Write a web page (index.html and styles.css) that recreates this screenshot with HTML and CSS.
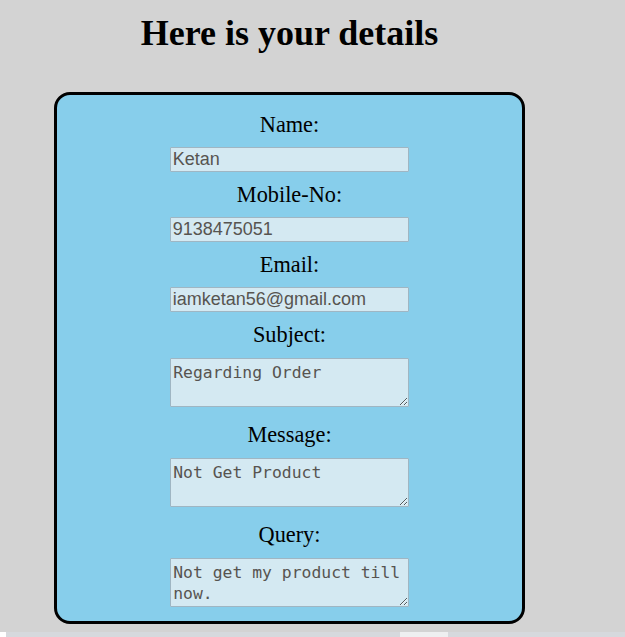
FILE: index.html
```html
<!DOCTYPE html>
<html>
<head>
<meta charset="utf-8">
<title>Details</title>
<link rel="stylesheet" href="styles.css">
</head>
<body>
<div class="page">
  <h1 class="title">Here is your details</h1>
  <form class="card">
    <label class="lbl" for="name">Name:</label>
    <input class="field" id="name" type="text" value="Ketan">
    <label class="lbl" for="mobile">Mobile-No:</label>
    <input class="field" id="mobile" type="text" value="9138475051">
    <label class="lbl" for="email">Email:</label>
    <input class="field" id="email" type="text" value="iamketan56@gmail.com">
    <label class="lbl" for="subject">Subject:</label>
    <textarea class="area" id="subject">Regarding Order</textarea>
    <label class="lbl" for="message">Message:</label>
    <textarea class="area" id="message">Not Get Product</textarea>
    <label class="lbl" for="query">Query:</label>
    <textarea class="area last" id="query">Not get my product till now.</textarea>
  </form>
</div>
<div class="strip">
  <div class="strip-white"></div>
  <div class="strip-gray"></div>
  <div class="strip-light"></div>
  <div class="strip-gray wide"></div>
</div>
</body>
</html>
```

FILE: styles.css
```css
html, body {
  margin: 0;
  padding: 0;
}

body {
  background: #d3d3d3;
  width: 625px;
  height: 637px;
  overflow: hidden;
}

.page {
  padding-left: 54px;
  width: 471px;
}

.title {
  margin: 13px 0 38px;
  font-family: "Liberation Serif", "Times New Roman", serif;
  font-weight: bold;
  font-size: 36px;
  line-height: 41px;
  text-align: center;
  color: #000;
}

.card {
  box-sizing: border-box;
  width: 471px;
  height: 532px;
  margin: 0;
  background: #87ceeb;
  border: 3px solid #000;
  border-radius: 16px;
  padding: 17px 0 0;
  display: flex;
  flex-direction: column;
  align-items: center;
}

.lbl {
  font-family: "Liberation Serif", "Times New Roman", serif;
  font-size: 22.3px;
  line-height: 25px;
  height: 25px;
  color: #000;
  margin-bottom: 10px;
}

.field {
  box-sizing: border-box;
  width: 239.5px;
  height: 25px;
  margin: 0 0 10px;
  padding: 0 2px;
  border: 1px solid #9fb6c3;
  border-radius: 1px;
  background: #d4e9f2;
  font-family: "Liberation Sans", Arial, sans-serif;
  font-size: 18px;
  color: #575450;
  outline: none;
}

.area {
  box-sizing: border-box;
  width: 238.5px;
  height: 49px;
  margin: 1px 0 15px;
  padding: 3px 2px 2px;
  border: 1px solid #9fb6c3;
  border-radius: 1px;
  background: #d4e9f2;
  font-family: "DejaVu Sans Mono", "Liberation Mono", monospace;
  font-size: 16.4px;
  line-height: 21px;
  color: #575450;
  outline: none;
  resize: both;
}

.area.last {
  margin-bottom: 0;
}

.strip {
  display: flex;
  margin-top: 8px;
  height: 5px;
}

.strip-white {
  width: 6px;
  background: #ffffff;
}

.strip-gray {
  width: 394px;
  background: #d6d9dd;
}

.strip-light {
  width: 48px;
  background: #eeeff0;
}

.strip-gray.wide {
  width: 177px;
}
```
